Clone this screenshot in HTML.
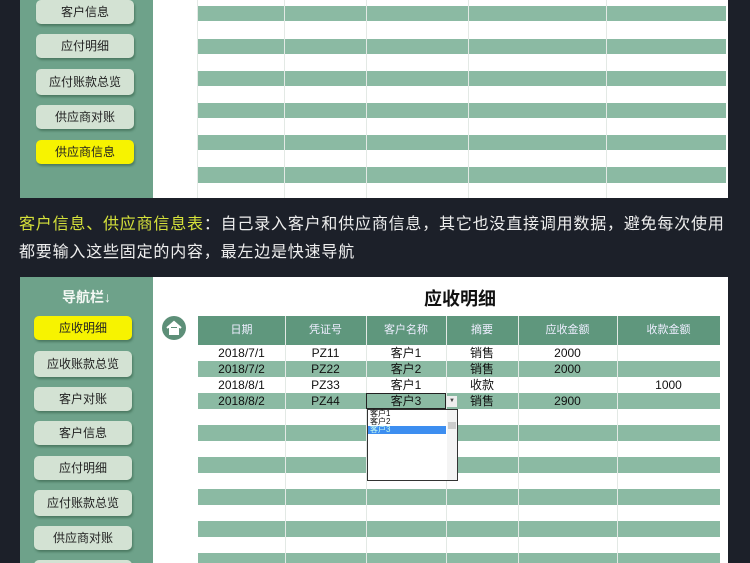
<!DOCTYPE html><html><head><meta charset="utf-8"><style>
html,body{margin:0;width:750px;height:563px;overflow:hidden}
body{background:#1c2029;position:relative;font-family:"Liberation Sans","Noto Sans CJK SC",sans-serif}
.a{position:absolute}
.side{background:#6ea28a}
.btn{position:absolute;width:98px;height:24px;border-radius:5px;background:#d3e2d3;box-shadow:1px 2px 2px #4b7a62;font-size:12px;text-align:center;line-height:24px;color:#222}
.y{background:#f7f300}
.g{background:#8bbaa3}
.vl{position:absolute;width:1px;background:#e3e9e5}
.t{position:absolute;font-size:11px;text-align:center;color:#111;line-height:16px}
.h{position:absolute;font-size:11px;text-align:center;color:#eef;line-height:29px;top:316px}
</style></head><body>
<div class="a" style="left:0;top:0;width:750px;height:563px;overflow:hidden">
<div class="a" style="left:20px;top:0;width:708px;height:198px;background:#fff"></div>
<div class="a side" style="left:20px;top:0;width:133px;height:198px"></div>
<div class="btn" style="left:36px;top:0">客户信息</div>
<div class="btn" style="left:36px;top:34px">应付明细</div>
<div class="btn" style="left:36px;top:69px;height:26px;line-height:26px">应付账款总览</div>
<div class="btn" style="left:36px;top:105px">供应商对账</div>
<div class="btn y" style="left:36px;top:140px">供应商信息</div>
<div class="a g" style="left:197px;top:6px;width:529px;height:15px"></div>
<div class="a g" style="left:197px;top:39px;width:529px;height:15px"></div>
<div class="a g" style="left:197px;top:71px;width:529px;height:15px"></div>
<div class="a g" style="left:197px;top:103px;width:529px;height:15px"></div>
<div class="a g" style="left:197px;top:135px;width:529px;height:15px"></div>
<div class="a g" style="left:197px;top:167px;width:529px;height:16px"></div>
<div class="vl" style="left:197px;top:0;height:198px"></div>
<div class="vl" style="left:284px;top:0;height:198px"></div>
<div class="vl" style="left:366px;top:0;height:198px"></div>
<div class="vl" style="left:468px;top:0;height:198px"></div>
<div class="vl" style="left:606px;top:0;height:198px"></div>
<div class="a" style="left:19px;top:211px;font-size:16px;color:#eee;line-height:28px;letter-spacing:0.8px;width:730px;white-space:nowrap"><span style="color:#d6e23a">客户信息、供应商信息表</span>：自己录入客户和供应商信息，其它也没直接调用数据，避免每次使用<br>都要输入这些固定的内容，最左边是快速导航</div>
<div class="a" style="left:20px;top:277px;width:708px;height:286px;background:#fff"></div>
<div class="a side" style="left:20px;top:277px;width:133px;height:286px"></div>
<div class="a" style="left:20px;top:287px;width:133px;text-align:center;color:#f4f8f4;font-size:14px;font-weight:bold">导航栏↓</div>
<div class="btn y" style="left:34px;top:316px">应收明细</div>
<div class="btn" style="left:34px;top:351px;height:26px;line-height:26px">应收账款总览</div>
<div class="btn" style="left:34px;top:387px">客户对账</div>
<div class="btn" style="left:34px;top:421px">客户信息</div>
<div class="btn" style="left:34px;top:456px">应付明细</div>
<div class="btn" style="left:34px;top:490px;height:26px;line-height:26px">应付账款总览</div>
<div class="btn" style="left:34px;top:526px">供应商对账</div>
<div class="btn" style="left:34px;top:560px"></div>
<div class="a" style="left:380px;top:285px;width:160px;text-align:center;font-size:18px;font-weight:bold;color:#111">应收明细</div>
<svg class="a" style="left:162px;top:316px" width="24" height="24"><circle cx="12" cy="12" r="12" fill="#5d8f78"/><path d="M5 12 L12 6 L19 12 M8 11 V18 H16 V11 M11 18 V14 H13 V18" stroke="#fff" stroke-width="2" fill="#fff"/></svg>
<div class="a" style="left:198px;top:316px;width:522px;height:29px;background:#5f977d"></div>
<div class="a g" style="left:198px;top:361px;width:522px;height:16px"></div>
<div class="a g" style="left:198px;top:393px;width:522px;height:16px"></div>
<div class="a g" style="left:198px;top:425px;width:522px;height:16px"></div>
<div class="a g" style="left:198px;top:457px;width:522px;height:16px"></div>
<div class="a g" style="left:198px;top:489px;width:522px;height:16px"></div>
<div class="a g" style="left:198px;top:521px;width:522px;height:16px"></div>
<div class="a g" style="left:198px;top:553px;width:522px;height:16px"></div>
<div class="vl" style="left:285px;top:316px;height:247px"></div>
<div class="vl" style="left:366px;top:316px;height:247px"></div>
<div class="vl" style="left:446px;top:316px;height:247px"></div>
<div class="vl" style="left:518px;top:316px;height:247px"></div>
<div class="vl" style="left:617px;top:316px;height:247px"></div>
<div class="h" style="left:198px;width:87px">日期</div>
<div class="h" style="left:285px;width:81px">凭证号</div>
<div class="h" style="left:366px;width:80px">客户名称</div>
<div class="h" style="left:446px;width:72px">摘要</div>
<div class="h" style="left:518px;width:99px">应收金额</div>
<div class="h" style="left:617px;width:103px">收款金额</div>
<div class="t" style="left:198px;top:345px;width:87px;font-size:12px">2018/7/1<br>2018/7/2<br>2018/8/1<br>2018/8/2</div>
<div class="t" style="left:285px;top:345px;width:81px;font-size:12px">PZ11<br>PZ22<br>PZ33<br>PZ44</div>
<div class="t" style="left:366px;top:345px;width:80px;font-size:12px">客户1<br>客户2<br>客户1<br>客户3</div>
<div class="t" style="left:446px;top:345px;width:72px;font-size:12px">销售<br>销售<br>收款<br>销售</div>
<div class="t" style="left:518px;top:345px;width:99px;font-size:12px">2000<br>2000<br><br>2900</div>
<div class="t" style="left:617px;top:377px;width:103px;font-size:12px">1000</div>
<div class="a" style="left:366px;top:393px;width:78px;height:14px;border:1px solid #222"></div>
<div class="a" style="left:447px;top:396px;width:10px;height:11px;background:#eee;font-size:6px;text-align:center;line-height:11px;color:#444">▼</div>
<div class="a" style="left:367px;top:409px;width:91px;height:72px;background:#fff;border:1px solid #333;box-sizing:border-box;font-size:8px;line-height:8px;color:#111">
<div style="padding-left:2px">客户1</div><div style="padding-left:2px">客户2</div><div style="padding-left:2px;background:#3d8ef0;color:#cfe;width:76px">客户3</div>
<div class="a" style="right:0;top:0;width:10px;height:70px;background:#f4f4f4"></div>
<div class="a" style="right:1px;top:12px;width:8px;height:7px;background:#ccc"></div></div>
</div>
</body></html>
